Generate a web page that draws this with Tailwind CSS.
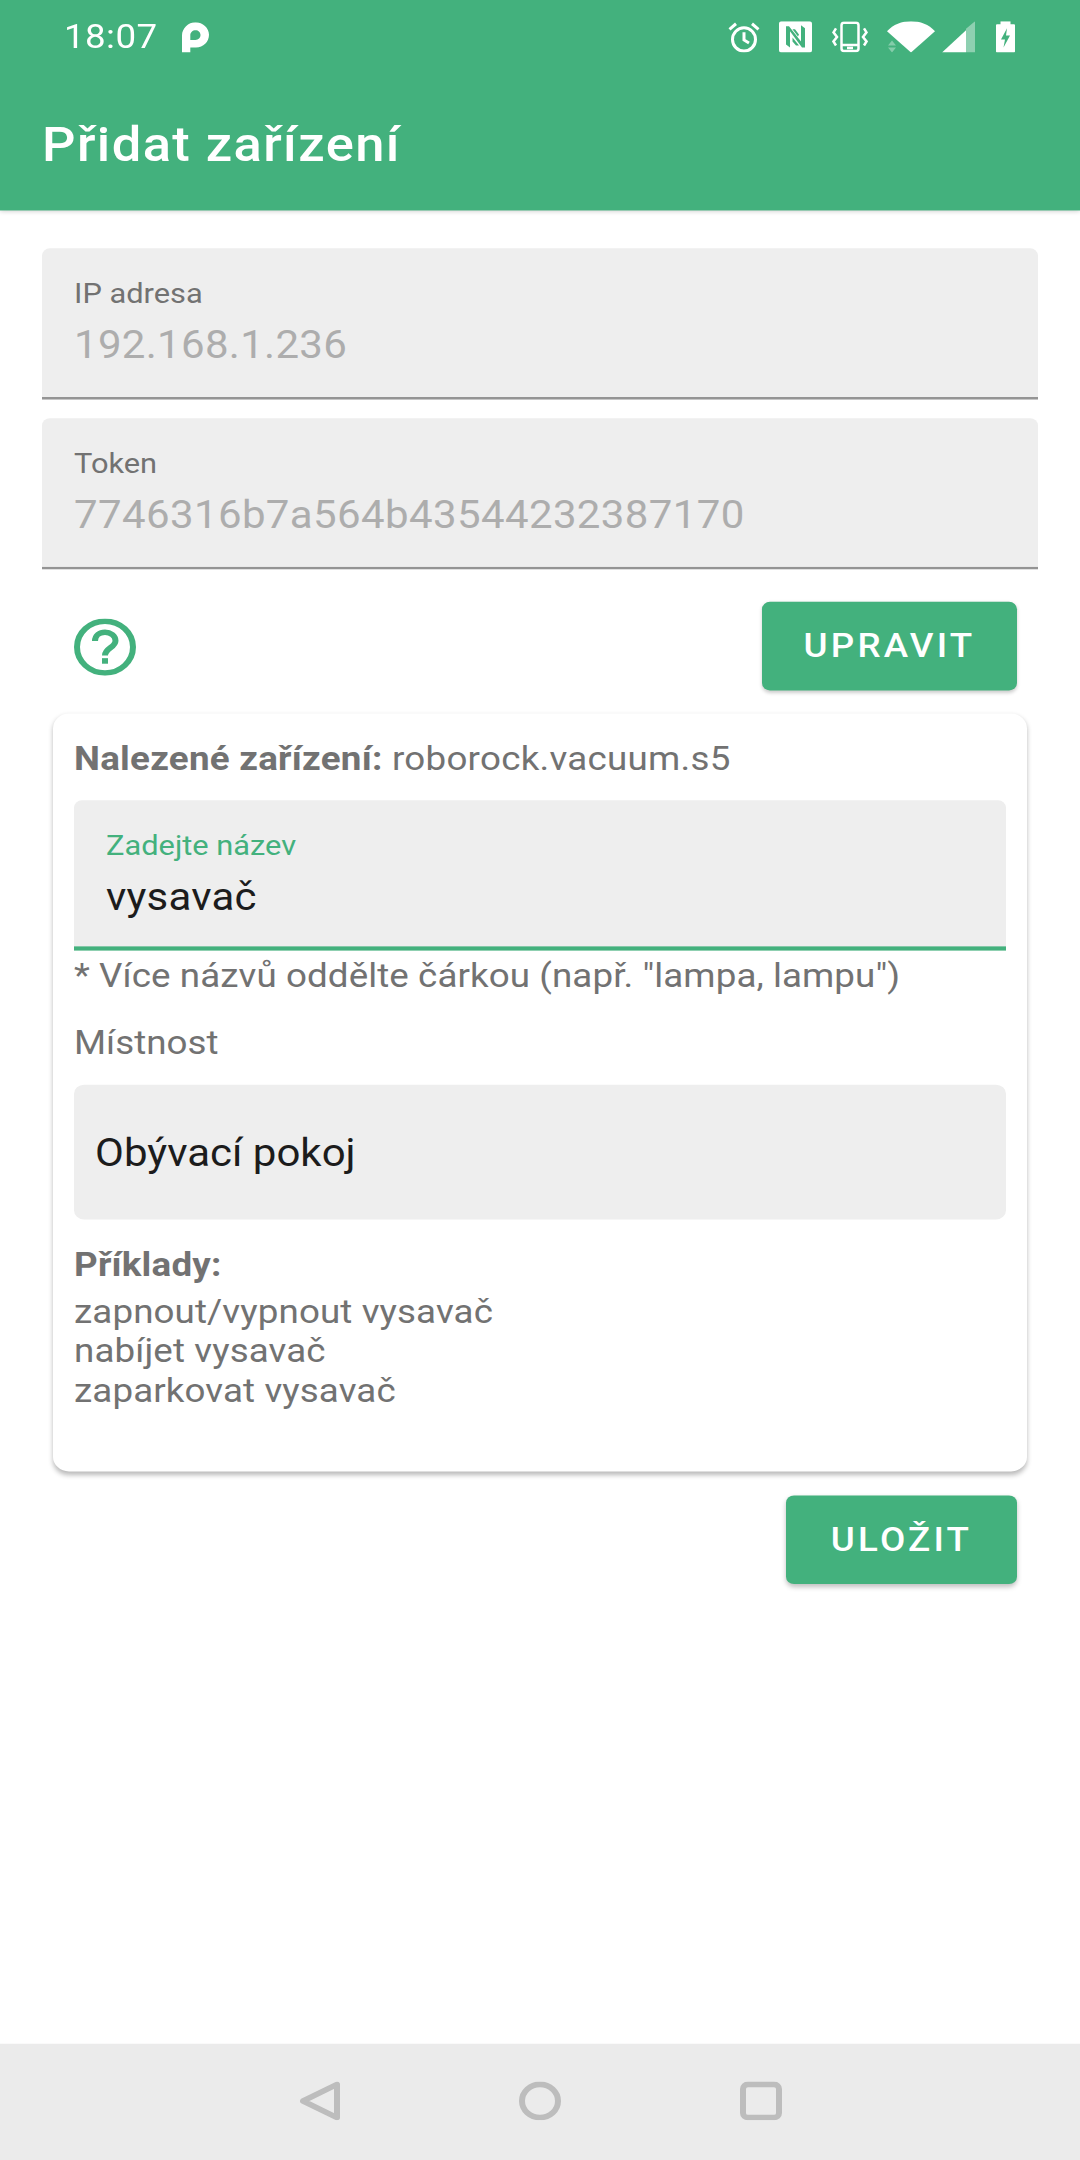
<!doctype html>
<html lang="cs"><head><meta charset="utf-8"><script src="https://cdn.jsdelivr.net/npm/@tailwindcss/browser@4"></script></head>
<body class="m-0 bg-white">
<div class="w-[1080px] h-[2160px] overflow-hidden">
<div class="w-[1080px] h-[2340px] origin-top scale-y-[0.9231] flex flex-col font-['Roboto',sans-serif] bg-white">
  <header class="h-[228px] shrink-0 bg-[#43b17d] text-white shadow-[0_2px_5px_rgba(0,0,0,0.2)] relative flex flex-col">
    <div class="h-[80px] flex items-center pl-[64px] pr-[65px]">
      <span class="text-[36.750px] leading-[44px] tracking-[0.4px]">18:07</span>
      <svg class="ml-[24px] w-[27px] h-[33px]" preserveAspectRatio="none" viewBox="0 0 26 30"><path fill="#fff" fill-rule="evenodd" d="M0 30V13C0 6 6 0 13 0s13 5.500 13 12.500-5.500 12.500-12.500 12.500H8V30zM8 17.500h5c2.800 0 4.800-2.200 4.800-4.800S15.800 8 13 8 8 10 8 13z"/></svg>
      <div class="ml-auto flex items-center">
        <svg class="w-[32px] h-[34px]" preserveAspectRatio="none" viewBox="0 0 32 31" fill="none" stroke="#fff" stroke-width="3"><circle cx="16" cy="18" r="11.500"/><path d="M16 11V18.500L21 21.500M1.500 8L8 2.500M30.500 8L24 2.500"/></svg>
        <svg class="ml-[19px] w-[33px] h-[34px]" preserveAspectRatio="none" viewBox="0 0 33 31"><path fill="#fff" fill-rule="evenodd" d="M2.500 0H30.500a2.500 2.500 0 0 1 2.500 2.500V28.500a2.500 2.500 0 0 1-2.500 2.500H2.500a2.500 2.500 0 0 1-2.500-2.500V2.500a2.500 2.500 0 0 1 2.500-2.500zM7 5V23L11 26V10L23 26H26V7L22 4V20L10 5zM13.500 8H16L20 13 19 15zM13.500 16L20 24H17L13.500 20z"/></svg>
        <svg class="ml-[20px] w-[36px] h-[34px]" preserveAspectRatio="none" viewBox="0 0 36 31" fill="none" stroke="#fff" stroke-width="2.500"><rect x="9.500" y="1.500" width="17" height="28" rx="2.500"/><path d="M9.500 23.500H26.500M15 26.500H21M4 7L1.500 11 5 15.500 1.500 20 4 24M32 7L34.500 11 31 15.500 34.500 20 32 24"/></svg>
        <svg class="ml-[19px] w-[48px] h-[34px]" preserveAspectRatio="none" viewBox="0 0 48 31"><path fill="#fff" d="M0 10C6 3 15 0 24 0s18 3 24 10L24 31z"/><path fill="#fff" opacity=".35" d="M5 19L9 24H1zM1 26H9L5 31z"/></svg>
        <svg class="ml-[7px] w-[33px] h-[34px]" preserveAspectRatio="none" viewBox="0 0 33 31"><path fill="#fff" opacity=".4" d="M24 7.500L33 0V31H24z"/><path fill="#fff" d="M0 31L24 9V31z"/></svg>
        <svg class="ml-[21px] w-[19px] h-[34px]" preserveAspectRatio="none" viewBox="0 0 19 31"><path fill="#fff" fill-rule="evenodd" d="M4.500 0H14.500V3H18a1 1 0 0 1 1 1V30a1 1 0 0 1-1 1H1a1 1 0 0 1-1-1V4a1 1 0 0 1 1-1H4.500zM11 7L5 18H9L7.500 26 14 14H10z"/></svg>
      </div>
    </div>
    <h1 class="mt-[45px] pl-[42px] text-[52.500px] leading-[62px] font-medium tracking-[1.400px]">Přidat zařízení</h1>
  </header>

  <main class="flex-1 flex flex-col px-[42px]">
    <div class="mt-[41px] h-[164px] bg-[#eeeeee] rounded-t-[8px] border-b-[3px] border-[#949494] px-[32px] pt-[29px]">
      <div class="text-[30.800px] leading-[40px] text-[#727272]">IP adresa</div>
      <div class="mt-[10px] text-[42px] leading-[52px] tracking-[0.300px] text-[#adadad]">192.168.1.236</div>
    </div>
    <div class="mt-[20px] h-[164px] bg-[#eeeeee] rounded-t-[8px] border-b-[3px] border-[#949494] px-[32px] pt-[29px]">
      <div class="text-[30.800px] leading-[40px] text-[#727272]">Token</div>
      <div class="mt-[10px] text-[42px] leading-[52px] tracking-[0.380px] text-[#adadad]">7746316b7a564b43544232387170</div>
    </div>

    <div class="mt-[35px] flex items-center justify-between pl-[32px] pr-[21px]">
      <svg width="62" height="62" viewBox="0 0 62 62" fill="none" class="mt-[2px]"><circle cx="31" cy="31" r="28" stroke="#43b17d" stroke-width="6"/><path d="M21 24.500C21 18.500 25.500 15 31 15s10.500 3.500 10.500 9c0 7.500-10.500 8-10.500 16" stroke="#43b17d" stroke-width="6"/><rect x="28" y="43" width="6" height="6" fill="#43b17d"/></svg>
      <button class="w-[255px] h-[96px] rounded-[8px] bg-[#43b17d] text-white text-[36.750px] font-medium tracking-[3.200px] shadow-[0_2px_4px_rgba(0,0,0,0.2)]">UPRAVIT</button>
    </div>

    <section class="mt-[25px] mx-[11px] h-[821px] bg-white rounded-[16px] shadow-[0_3px_5px_rgba(0,0,0,0.28)] px-[21px] pt-[27px] text-[36.750px] text-[#727272]">
      <p class="leading-[44px] tracking-[0.250px]"><strong class="font-bold">Nalezené zařízení:</strong> roborock.vacuum.s5</p>
      <div class="mt-[23px] h-[163px] bg-[#eeeeee] rounded-t-[8px] border-b-[5px] border-[#43b17d] px-[32px] pt-[29px]">
        <div class="text-[30.800px] leading-[40px] text-[#43b17d]">Zadejte název</div>
        <div class="mt-[10px] text-[42px] leading-[52px] tracking-[0.200px] text-[#1c1c1c]">vysavač</div>
      </div>
      <p class="mt-[5px] leading-[44px] tracking-[0.080px]">* Více názvů oddělte čárkou (např. "lampa, lampu")</p>
      <p class="mt-[29px] leading-[44px]">Místnost</p>
      <div class="mt-[23px] h-[146px] bg-[#eeeeee] rounded-[10px] px-[21px] flex items-center text-[42px] text-[#1c1c1c]">Obývací pokoj</div>
      <p class="mt-[27px] leading-[44px] font-bold tracking-[0.200px]">Příklady:</p>
      <div class="mt-[7px] leading-[43px] tracking-[0.100px]">
        <div>zapnout/vypnout vysavač</div>
        <div>nabíjet vysavač</div>
        <div>zaparkovat vysavač</div>
      </div>
    </section>

    <div class="mt-[26px] flex justify-end pr-[21px]">
      <button class="w-[231px] h-[96px] rounded-[8px] bg-[#43b17d] text-white text-[36.750px] font-medium tracking-[3.200px] shadow-[0_3px_5px_rgba(0,0,0,0.25)]">ULOŽIT</button>
    </div>
  </main>

  <nav class="h-[126px] shrink-0 bg-[#ebebeb] flex items-start justify-center gap-[179px] pt-[41px] pl-[2px]">
    <svg width="40" height="42" viewBox="0 0 40 42" fill="none" stroke="#bdbdbd" stroke-width="6" stroke-linejoin="round"><path d="M37 3V39L3 21z"/></svg>
    <svg width="42" height="42" viewBox="0 0 42 42" fill="none" stroke="#bdbdbd" stroke-width="6"><circle cx="21" cy="21" r="18"/></svg>
    <svg width="42" height="42" viewBox="0 0 42 42" fill="none" stroke="#bdbdbd" stroke-width="6"><rect x="3" y="3" width="36" height="36" rx="5"/></svg>
  </nav>
</div>
</div>
</body></html>
